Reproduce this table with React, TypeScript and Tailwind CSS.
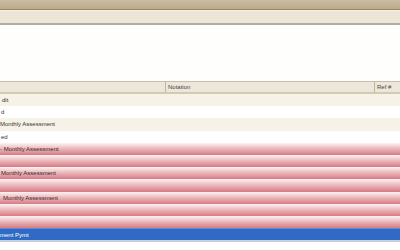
const rows = [
  { text: 'dit', kind: 'odd', indent: 'pl-[2px]' },
  { text: 'd', kind: 'even', indent: 'pl-[1px]' },
  { text: 'Monthly Assessment', kind: 'odd', indent: 'pl-0' },
  { text: 'ed', kind: 'even', indent: 'pl-[1px]' },
  { text: '- Monthly Assessment', kind: 'late', indent: 'pl-0' },
  { text: '', kind: 'late', indent: 'pl-0' },
  { text: 'Monthly Assessment', kind: 'late', indent: 'pl-[1px]' },
  { text: '', kind: 'late', indent: 'pl-0' },
  { text: 'Monthly Assessment', kind: 'late', indent: 'pl-[3px]' },
  { text: '', kind: 'late', indent: 'pl-0' },
  { text: '', kind: 'late', indent: 'pl-0' },
  { text: 'ment Pymt', kind: 'selected', indent: 'pl-0' },
];

const rowClass: Record<string, string> = {
  odd: 'bg-[#f6f2e7] text-[#333]',
  even: 'bg-white text-[#333]',
  late: 'bg-gradient-to-b from-[#fdf3f3] via-[#eab4b8] to-[#d57b85] text-[#3a2a2a]',
  selected: 'bg-[#316ac5] text-white border-t border-[#5d8bd6]',
};

export default function App() {
  return (
    <div className="w-[400px] h-[250px] overflow-hidden bg-white flex flex-col text-[6px] leading-none" style={{ fontFamily: '"Liberation Sans", Arial, sans-serif' }}>
      {/* title strip */}
      <div className="h-[10px] shrink-0 bg-gradient-to-b from-[#cbbda4] to-[#bcab8c] border-b border-[#9a8461]" />
      {/* toolbar */}
      <div className="h-[15px] shrink-0 bg-[#ece6d8] border-t border-[#f4f0e6] border-b-2 border-b-[#b3ad9f]" />
      {/* empty panel */}
      <div className="h-[56px] shrink-0 bg-[#fefefc]" />

      {/* grid header */}
      <div className="h-[13px] shrink-0 flex items-center bg-[#ece7da] border-t border-[#c9bfa8] border-b-2 border-b-[#d3cab4] text-[#444]">
        <div className="w-[165px] h-full" />
        <div className="w-[209px] h-full flex items-center border-l border-[#bdb5a2] pl-[2px]">Notation</div>
        <div className="flex-1 h-full flex items-center border-l border-[#bdb5a2] pl-[2px]">Ref #</div>
      </div>

      {/* grid rows */}
      <div className="flex flex-col">
        {rows.map((r, i) => (
          <div key={i} className={`h-[12.2px] shrink-0 flex items-center overflow-hidden whitespace-nowrap ${rowClass[r.kind]}`}>
            <span className={r.indent}>{r.text}</span>
          </div>
        ))}
      </div>
      <div className="h-[2px] shrink-0 bg-[#c4cede]" />
      <div className="flex-1 bg-white" />
    </div>
  );
}
